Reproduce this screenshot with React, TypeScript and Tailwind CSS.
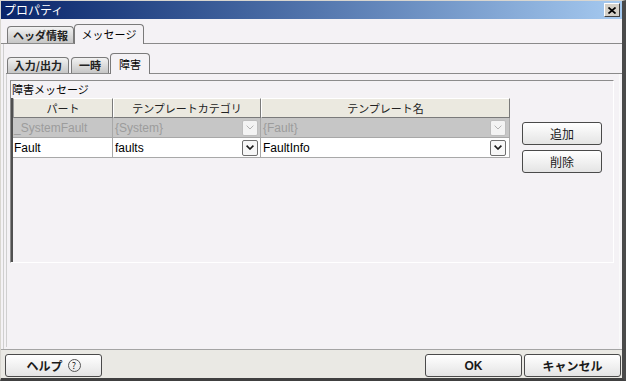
import React from "react";

const JP = "font-['Noto_Sans_CJK_JP',sans-serif]";
const LAT = "font-['Liberation_Sans','Noto_Sans_CJK_JP',sans-serif]";

function Chevron({ disabled }: { disabled?: boolean }) {
  return (
    <div
      className={`w-[16px] h-[16px] shrink-0 flex items-center justify-center rounded-[2px] border ${
        disabled ? "border-[#bdbdbd] bg-[#f3f3f3]" : "border-[#6e6e6e] bg-[#f7f7f7]"
      }`}
    >
      <svg width="8" height="5" viewBox="0 0 8 5">
        <path
          d="M0.6 0.6 L4 4 L7.4 0.6"
          fill="none"
          stroke={disabled ? "#b4b4b4" : "#1a1a1a"}
          strokeWidth={disabled ? 1 : 1.6}
        />
      </svg>
    </div>
  );
}

function OuterTab({ label, selected, w }: { label: string; selected?: boolean; w: string }) {
  if (selected)
    return (
      <div
        className={`${w} relative z-10 -mb-px h-[20px] flex items-center justify-center border border-b-0 border-[#7a7a7a] rounded-t-[4px] bg-[#f4f2f5] text-[11px] leading-none text-black`}
      >
        {label}
      </div>
    );
  return (
    <div
      className={`${w} h-[17px] flex items-center justify-center border border-b-0 border-[#7a7a7a] rounded-t-[4px] bg-linear-to-b from-[#f2f2f2] to-[#c6c6c6] text-[11px] leading-none font-bold text-[#222]`}
    >
      {label}
    </div>
  );
}

function InnerTab({ label, selected, w }: { label: string; selected?: boolean; w: string }) {
  if (selected)
    return (
      <div
        className={`${w} relative z-10 -mb-px h-[21px] flex items-center justify-center border border-b-0 border-[#7a7a7a] rounded-t-[4px] bg-[#f4f2f5] text-[11px] leading-none text-black`}
      >
        {label}
      </div>
    );
  return (
    <div
      className={`${w} h-[16px] flex items-center justify-center border border-b-0 border-[#7a7a7a] rounded-t-[4px] bg-linear-to-b from-[#f2f2f2] to-[#c6c6c6] text-[11px] leading-none font-bold text-[#222]`}
    >
      {label}
    </div>
  );
}

function Btn({ children, w, bold }: { children: React.ReactNode; w: string; bold?: boolean }) {
  return (
    <div
      className={`${w} h-[23px] flex items-center justify-center rounded-[3px] border border-[#4a4a4a] bg-linear-to-b from-[#ffffff] to-[#e4e4e4] text-[12px] leading-none text-[#1a1a1a] ${
        bold ? "font-bold" : ""
      }`}
    >
      {children}
    </div>
  );
}

export default function App() {
  return (
    <div
      className={`${JP} w-[626px] h-[381px] flex flex-col bg-[#f4f2f5] border-l border-t border-[#d8d6d0] border-r-[4px] border-r-[#4a4a4a] border-b-[3px] border-b-[#404040] overflow-hidden`}
    >
      {/* Title bar */}
      <div className="h-[18px] shrink-0 flex items-center justify-between pl-[3px] pr-[2px] bg-linear-to-r from-[#0a246a] to-[#a6caf0]">
        <span className="text-[12px] leading-none text-white">プロパティ</span>
        <div className="w-[16px] h-[14px] flex items-center justify-center bg-[#d4d0c8] border border-t-white border-l-white border-r-[#404040] border-b-[#404040]">
          <svg width="8" height="7" viewBox="0 0 8 7">
            <path d="M0.5 0.5 L7.5 6.5 M7.5 0.5 L0.5 6.5" stroke="#000" strokeWidth="1.7" fill="none" />
          </svg>
        </div>
      </div>

      {/* Outer tabs */}
      <div className="h-[25px] shrink-0 flex items-end pl-[6px] border-b border-[#8a8a8a]">
        <OuterTab label="ヘッダ情報" w="w-[67px]" />
        <OuterTab label="メッセージ" w="w-[70px]" selected />
      </div>

      {/* Outer panel */}
      <div className="flex-1 flex flex-col ml-[2px] border-l border-[#cfcfcf]">
        {/* Inner tabs */}
        <div className="h-[30px] shrink-0 flex items-end ml-[2px] pl-[1px] border-b border-[#8a8a8a] gap-[1px]">
          <InnerTab label="入力/出力" w="w-[62px] mr-[1px]" />
          <InnerTab label="一時" w="w-[38px]" />
          <InnerTab label="障害" w="w-[40px]" selected />
        </div>

        {/* Inner panel */}
        <div className="flex-1 ml-[2px] mr-[2px] mb-[2px] border-l border-r border-l-[#cfcfcf] border-r-[#fafafa] pt-[6px] pl-[3px]">
          {/* Group box */}
          <div className="w-[604px] h-[183px] flex flex-col border-t border-l border-[#8c8c8c] border-r border-b border-r-white border-b-white">
            <div className="h-[17px] shrink-0 flex items-center pl-[1px] text-[11px] leading-none text-black">
              障害メッセージ
            </div>
            <div className="flex-1 flex border-l-2 border-l-[#505050]">
              {/* Table */}
              <div className="w-[497px] flex flex-col">
                {/* Header */}
                <div className="h-[20px] flex text-[11px] leading-none text-[#222]">
                  <div className="w-[100px] flex items-center justify-center bg-[#ebe9e0] border border-t-white border-l-[#9a9a9a] border-r-[#7a7a7a] border-b-[#7a7a7a]">
                    パート
                  </div>
                  <div className="w-[148px] flex items-center justify-center bg-[#ebe9e0] border border-t-white border-l-white border-r-[#7a7a7a] border-b-[#7a7a7a]">
                    テンプレートカテゴリ
                  </div>
                  <div className="w-[249px] flex items-center justify-center bg-[#ebe9e0] border border-t-white border-l-white border-r-[#7a7a7a] border-b-[#7a7a7a]">
                    テンプレート名
                  </div>
                </div>
                {/* System row */}
                <div className={`${LAT} h-[20px] flex text-[12px] leading-none text-[#9c9c9c] bg-[#c6c6c6]`}>
                  <div className="w-[100px] flex items-center pl-[1px] border-r border-b border-[#a8a8a8]">
                    _SystemFault
                  </div>
                  <div className="w-[148px] flex items-center justify-between pl-[2px] pr-[2px] border-r border-b border-[#a8a8a8]">
                    <span>{"{System}"}</span>
                    <Chevron disabled />
                  </div>
                  <div className="w-[249px] flex items-center justify-between pl-[2px] pr-[3px] border-r border-b border-[#a8a8a8]">
                    <span>{"{Fault}"}</span>
                    <Chevron disabled />
                  </div>
                </div>
                {/* Fault row */}
                <div className={`${LAT} h-[20px] flex text-[12px] leading-none text-black bg-white`}>
                  <div className="w-[100px] flex items-center pl-[1px] border-r border-b border-[#a8a8a8]">
                    Fault
                  </div>
                  <div className="w-[148px] flex items-center justify-between pl-[2px] pr-[2px] border-r border-b border-[#a8a8a8]">
                    <span>faults</span>
                    <Chevron />
                  </div>
                  <div className="w-[249px] flex items-center justify-between pl-[2px] pr-[3px] border-r border-b border-[#a8a8a8]">
                    <span>FaultInfo</span>
                    <Chevron />
                  </div>
                </div>
              </div>
              {/* Side buttons */}
              <div className="flex-1 flex flex-col pt-[24px] pl-[12px] gap-[5px]">
                <Btn w="w-[80px]">追加</Btn>
                <Btn w="w-[80px]">削除</Btn>
              </div>
            </div>
          </div>
        </div>
      </div>

      {/* Bottom bar */}
      <div className="h-[29px] shrink-0 flex items-start justify-between pt-[4px] pl-[4px] pr-[1px] bg-[#eae9e4] border-t border-[#a4a4a4]">
        <Btn w="w-[97px]" bold>
          <span>ヘルプ</span>
          <span className="ml-[5px] w-[13px] h-[13px] rounded-full border border-[#555] flex items-center justify-center text-[9px] font-normal leading-none">
            ?
          </span>
        </Btn>
        <div className="flex gap-[2px]">
          <Btn w="w-[97px]" bold>
            <span className={LAT}>OK</span>
          </Btn>
          <Btn w="w-[97px]" bold>
            キャンセル
          </Btn>
        </div>
      </div>
    </div>
  );
}
